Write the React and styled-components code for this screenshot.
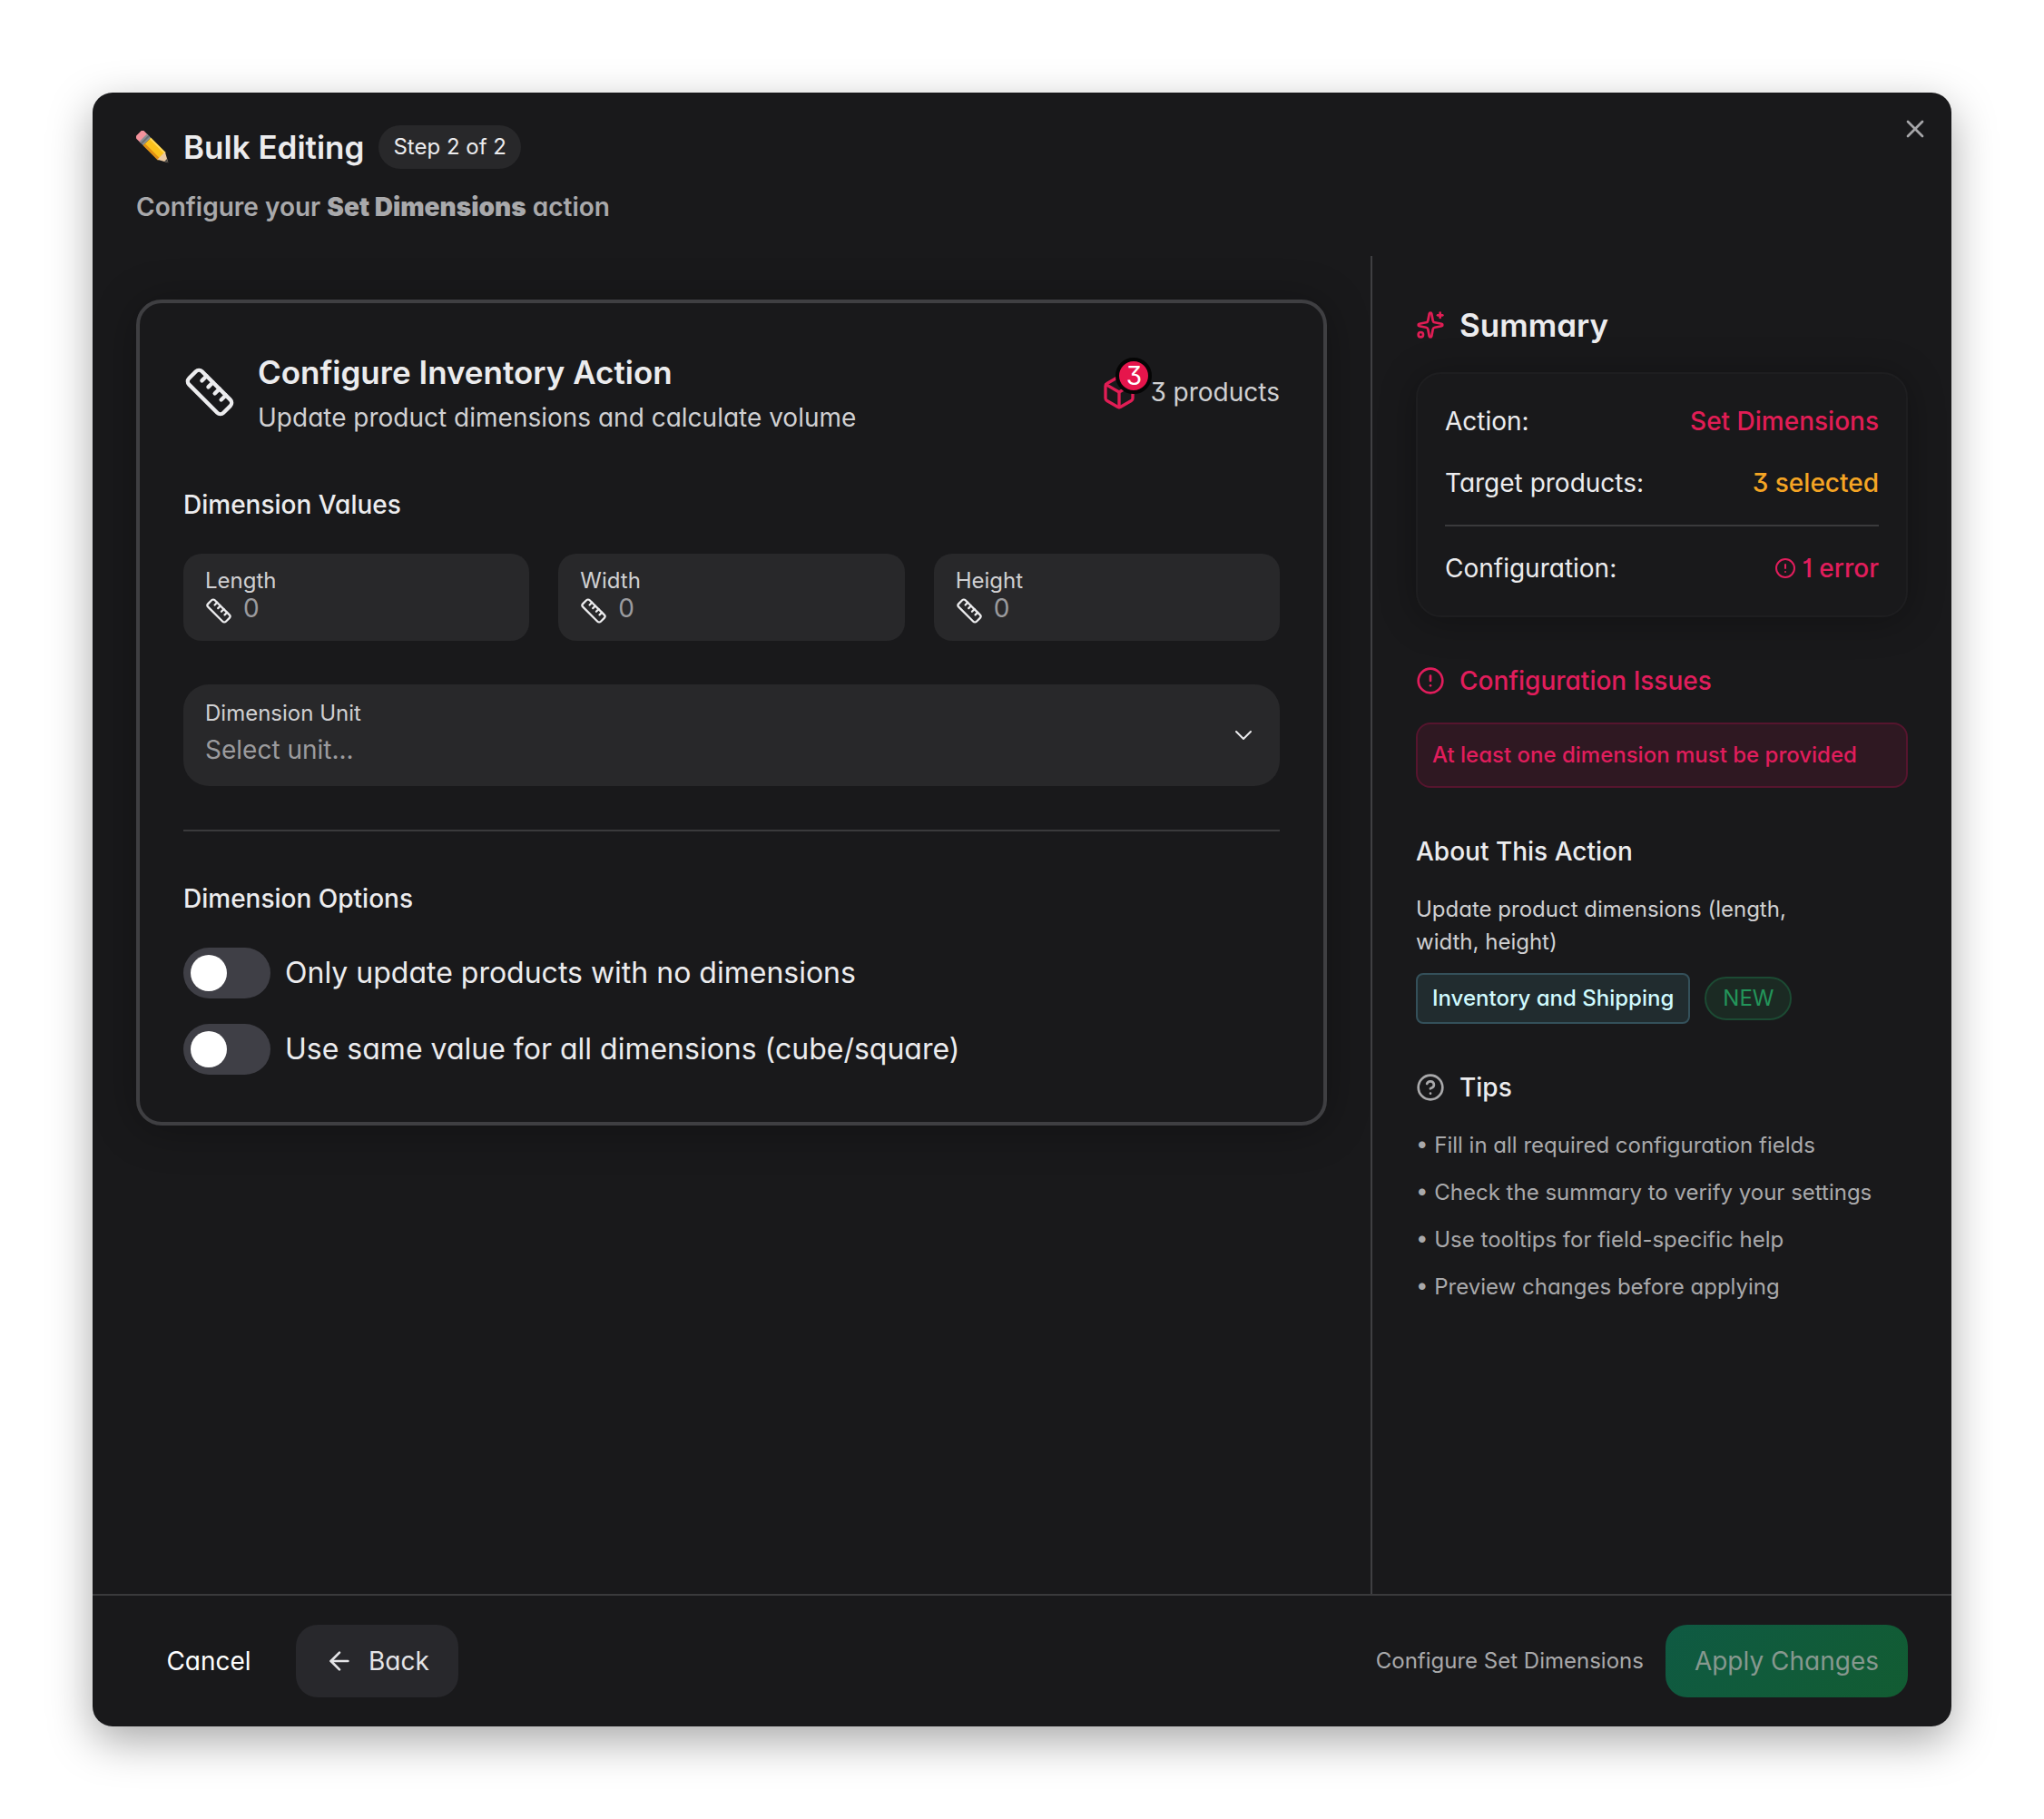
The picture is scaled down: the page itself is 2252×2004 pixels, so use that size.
import React, { useState } from 'react'
import styled, { createGlobalStyle, css } from 'styled-components'
import { ArrowLeft, Box, ChevronDown, CircleAlert, CircleHelp, Sparkles, X } from 'lucide-react'

const GlobalStyle = createGlobalStyle`
    * {
        box-sizing: border-box;
    }
    body {
        margin: 0;
        background: #ffffff;
        font-family: Inter, "Liberation Sans", sans-serif;
        font-feature-settings: "cv01", "cv09", "cv11";
        font-size: 28px;
        line-height: 40px;
        color: #ececee;
    }
    h1, h2, h3, p, ul {
        margin: 0;
        padding: 0;
        font-size: inherit;
        font-weight: 400;
    }
    button, input, select {
        font: inherit;
        font-feature-settings: inherit;
        letter-spacing: inherit;
        color: inherit;
    }
    svg {
        display: block;
        flex-shrink: 0;
    }
`

const Page = styled.div`
    min-height: 100vh;
    padding: 102px;
    display: flex;
`

const Modal = styled.div`
    position: relative;
    flex: 1;
    display: flex;
    flex-direction: column;
    border-radius: 22px;
    background: #19191b;
    box-shadow: 0 16px 48px rgba(0, 0, 0, 0.34);
`

const CloseButton = styled.button`
    position: absolute;
    top: 16px;
    right: 16px;
    padding: 8px;
    border: none;
    background: none;
    color: #a6a6a9;
    cursor: pointer;
`

const Header = styled.header`
    padding: 36px 48px 34px;
    display: flex;
    flex-direction: column;
    gap: 22px;
`

const TitleRow = styled.div`
    display: flex;
    align-items: center;
    gap: 16px;
`

const Title = styled.h1`
    font-size: 35px;
    line-height: 48px;
    font-weight: 600;
`

const StepBadge = styled.span`
    padding: 0 16px;
    border-radius: 24px;
    background: #28282a;
    font-size: 24px;
    line-height: 48px;
`

const Subtitle = styled.p`
    font-weight: 600;
    color: #a9a9ab;
    b {
        font-weight: 900;
    }
`

const Body = styled.div`
    flex: 1;
    display: flex;
`

const Main = styled.main`
    flex: 1;
    padding: 48px;
`

const Card = styled.section`
    padding: 48px 48px 52px;
    border: 4px solid #3f3f42;
    border-radius: 28px;
    box-shadow: 0 4px 48px rgba(0, 0, 0, 0.3);
`

const CardHeader = styled.div`
    display: flex;
    align-items: center;
    gap: 24px;
    margin-bottom: 54px;
`

const CardText = styled.div`
    flex: 1;
    h2 {
        font-size: 35px;
        line-height: 56px;
        font-weight: 600;
    }
    p {
        line-height: 44px;
        color: #d0d0d2;
    }
`

const Products = styled.div`
    display: flex;
    align-items: center;
    gap: 14px;
    color: #d0d0d2;
`

const BoxWrap = styled.div`
    position: relative;
    color: #e11d55;
`

const CountBadge = styled.span`
    position: absolute;
    top: -18px;
    right: -16px;
    width: 40px;
    height: 40px;
    border: 4px solid #050505;
    border-radius: 50%;
    background: #e6154c;
    color: #ffffff;
    line-height: 32px;
    text-align: center;
`

const SectionTitle = styled.h3`
    font-weight: 500;
`

const Fields = styled.div`
    display: grid;
    grid-template-columns: repeat(3, 1fr);
    gap: 32px;
    margin: 34px 0 48px;
`

const FieldBox = styled.label`
    display: block;
    height: 96px;
    padding: 14px 24px;
    border-radius: 20px;
    background: #28282a;
    font-size: 24px;
    line-height: 32px;
    color: #d0d0d2;
`

const FieldInput = styled.span`
    display: flex;
    align-items: flex-end;
    gap: 12px;
    height: 32px;
    color: #ececee;
    input {
        align-self: flex-start;
        width: 100%;
        height: 28px;
        padding: 0;
        border: none;
        outline: none;
        background: none;
        font-size: 28px;
        line-height: 28px;
    }
    input::placeholder {
        color: #9b9b9e;
        opacity: 1;
    }
`

const SelectBox = styled.label`
    display: flex;
    align-items: center;
    height: 112px;
    padding: 0 24px;
    border-radius: 28px;
    background: #28282a;
`

const SelectText = styled.span`
    flex: 1;
    display: flex;
    flex-direction: column;
    gap: 4px;
    padding-bottom: 4px;
    span {
        font-size: 24px;
        line-height: 32px;
        color: #d0d0d2;
    }
    select {
        appearance: none;
        height: 40px;
        padding: 0;
        border: none;
        outline: none;
        background: none;
        color: #9b9b9e;
    }
`

const Divider = styled.hr`
    width: 100%;
    height: 2px;
    margin: ${(props) => props.$margin};
    border: none;
    background: #3a3a3c;
`

const Switches = styled.div`
    display: flex;
    flex-direction: column;
    align-items: flex-start;
    gap: 28px;
    margin-top: 34px;
`

const SwitchLabel = styled.label`
    display: flex;
    align-items: center;
    gap: 16px;
    font-size: 32px;
    line-height: 56px;
    cursor: pointer;
`

const SwitchInput = styled.input`
    appearance: none;
    display: flex;
    align-items: center;
    width: 96px;
    height: 56px;
    margin: 0;
    padding: 0 8px;
    border-radius: 28px;
    background: #3f3f46;
    cursor: pointer;
    &::before {
        content: "";
        width: 40px;
        height: 40px;
        border-radius: 50%;
        background: #ffffff;
    }
    &:checked {
        justify-content: flex-end;
        background: #e11d55;
    }
`

const Aside = styled.aside`
    width: 640px;
    padding: 48px;
    border-left: 2px solid #3f3f42;
`

const AsideTitle = styled.h2`
    display: flex;
    align-items: center;
    gap: 16px;
    font-weight: 500;
    ${(props) => props.$large && css`
        font-size: 35px;
        line-height: 56px;
        font-weight: 600;
    `}
    color: ${(props) => props.$color || '#ececee'};
    svg {
        color: ${(props) => props.$iconColor};
    }
`

const SummaryCard = styled.div`
    margin: 24px 0 50px;
    padding: 32px 30px;
    border: 2px solid #1e1e20;
    border-radius: 28px;
    box-shadow: 0 4px 40px rgba(0, 0, 0, 0.3);
`

const SummaryRow = styled.div`
    display: flex;
    justify-content: space-between;
    & + & {
        margin-top: 28px;
    }
`

const Value = styled.span`
    display: flex;
    align-items: center;
    gap: 6px;
    font-weight: 500;
    color: ${(props) => props.$color};
`

const ErrorBox = styled.p`
    margin: 26px 0 50px;
    padding: 16px;
    border: 2px solid #56152e;
    border-radius: 16px;
    background: #2f1822;
    font-size: 24px;
    line-height: 36px;
    font-weight: 500;
    color: #e11d5c;
`

const About = styled.p`
    max-width: 480px;
    margin: 26px 0 16px;
    font-size: 24px;
    line-height: 36px;
    color: #d0d0d2;
`

const Chips = styled.div`
    display: flex;
    align-items: center;
    gap: 16px;
    margin-bottom: 50px;
    font-size: 24px;
`

const CategoryChip = styled.span`
    padding: 0 16px;
    border: 2px solid #34505a;
    border-radius: 8px;
    background: #212c2f;
    line-height: 52px;
    font-weight: 500;
    color: #cffafe;
`

const NewChip = styled.span`
    padding: 0 18px;
    border: 2px solid #1c4a33;
    border-radius: 24px;
    background: #1b2a23;
    line-height: 44px;
    color: #23955a;
`

const TipList = styled.ul`
    margin-top: 26px;
    display: flex;
    flex-direction: column;
    gap: 16px;
    list-style: none;
    font-size: 24px;
    line-height: 36px;
    color: #a9a9ab;
`

const Footer = styled.footer`
    display: flex;
    align-items: center;
    gap: 16px;
    padding: 32px 48px;
    border-top: 2px solid #3a3a3c;
`

const Button = styled.button`
    display: flex;
    align-items: center;
    justify-content: center;
    gap: 16px;
    min-width: 160px;
    height: 80px;
    padding: 0 32px;
    border: none;
    border-radius: 24px;
    background: ${(props) => props.$background || 'none'};
    color: ${(props) => props.$color};
    cursor: pointer;
`

const FooterNote = styled.span`
    margin: 0 8px 0 auto;
    font-size: 24px;
    color: #a9a9ab;
`

const RulerIcon = ({ size }) => (
    <svg width={size} height={size} viewBox="-12 -12 24 24" fill="none" stroke="currentColor" strokeWidth="1.8" strokeLinecap="round" aria-hidden="true">
        <g transform="rotate(45)">
            <rect x="-11.1" y="-4.2" width="22.2" height="8.4" rx="2" />
            <path d="M-6.2-4.2v3M-2.1-4.2v3M2.1-4.2v3M6.2-4.2v3" />
        </g>
    </svg>
)

const PencilIcon = () => (
    <svg width="36" height="36" viewBox="0 0 36 36" aria-hidden="true">
        <g transform="rotate(45)">
            <rect x="4" y="-6" width="12" height="12" rx="3" fill="#f3929c" />
            <path d="M11-6h6V6h-6Z" fill="#8a8f93" />
            <path d="M13-6h2V6h-2Z" fill="#6a6f73" />
            <path d="M17-6h23V6H17Z" fill="#fcc21b" />
            <path d="M17 3h23v3H17Z" fill="#e08e14" />
            <path d="M17-6h23v2H17Z" fill="#ffd95a" />
            <path d="M39-6 50 0 39 6Z" fill="#ecc9a0" />
            <path d="M46-2 50 0l-4 2Z" fill="#444444" />
        </g>
    </svg>
)

const fields = ['Length', 'Width', 'Height']
const units = ['Centimeters', 'Inches', 'Meters']
const options = [
    'Only update products with no dimensions',
    'Use same value for all dimensions (cube/square)',
]
const tips = [
    'Fill in all required configuration fields',
    'Check the summary to verify your settings',
    'Use tooltips for field-specific help',
    'Preview changes before applying',
]

function App() {
    const [values, setValues] = useState({})
    const [unit, setUnit] = useState('')

    return (
        <Page>
            <GlobalStyle />
            <Modal role="dialog" aria-labelledby="title">
                <Header>
                    <TitleRow>
                        <PencilIcon />
                        <Title id="title">Bulk Editing</Title>
                        <StepBadge>Step 2 of 2</StepBadge>
                    </TitleRow>
                    <Subtitle>Configure your <b>Set Dimensions</b> action</Subtitle>
                </Header>
                <Body>
                    <Main>
                        <Card>
                            <CardHeader>
                                <RulerIcon size={58} />
                                <CardText>
                                    <h2>Configure Inventory Action</h2>
                                    <p>Update product dimensions and calculate volume</p>
                                </CardText>
                                <Products>
                                    <BoxWrap>
                                        <Box size={40} />
                                        <CountBadge>3</CountBadge>
                                    </BoxWrap>
                                    3 products
                                </Products>
                            </CardHeader>
                            <SectionTitle>Dimension Values</SectionTitle>
                            <Fields>
                                {fields.map((name) => (
                                    <FieldBox key={name}>
                                        {name}
                                        <FieldInput>
                                            <RulerIcon size={30} />
                                            <input
                                                type="text"
                                                inputMode="decimal"
                                                placeholder="0"
                                                value={values[name] || ''}
                                                onChange={(e) => setValues({ ...values, [name]: e.target.value })}
                                            />
                                        </FieldInput>
                                    </FieldBox>
                                ))}
                            </Fields>
                            <SelectBox>
                                <SelectText>
                                    <span>Dimension Unit</span>
                                    <select value={unit} onChange={(e) => setUnit(e.target.value)}>
                                        <option value="">Select unit...</option>
                                        {units.map((name) => <option key={name}>{name}</option>)}
                                    </select>
                                </SelectText>
                                <ChevronDown size={32} strokeWidth={1.5} />
                            </SelectBox>
                            <Divider $margin="48px 0 54px" />
                            <SectionTitle>Dimension Options</SectionTitle>
                            <Switches>
                                {options.map((text) => (
                                    <SwitchLabel key={text}>
                                        <SwitchInput type="checkbox" role="switch" />
                                        {text}
                                    </SwitchLabel>
                                ))}
                            </Switches>
                        </Card>
                    </Main>
                    <Aside>
                        <AsideTitle $large $iconColor="#e11d55">
                            <Sparkles size={32} />
                            Summary
                        </AsideTitle>
                        <SummaryCard>
                            <SummaryRow>
                                Action:
                                <Value $color="#e11d55">Set Dimensions</Value>
                            </SummaryRow>
                            <SummaryRow>
                                Target products:
                                <Value $color="#f5a524">3 selected</Value>
                            </SummaryRow>
                            <Divider $margin="26px 0" />
                            <SummaryRow>
                                Configuration:
                                <Value $color="#e11d5c">
                                    <CircleAlert size={24} strokeWidth={2} />
                                    1 error
                                </Value>
                            </SummaryRow>
                        </SummaryCard>
                        <AsideTitle $color="#e11d5c" $iconColor="#e11d5c">
                            <CircleAlert size={32} strokeWidth={2} />
                            Configuration Issues
                        </AsideTitle>
                        <ErrorBox>At least one dimension must be provided</ErrorBox>
                        <AsideTitle>About This Action</AsideTitle>
                        <About>Update product dimensions (length, width, height)</About>
                        <Chips>
                            <CategoryChip>Inventory and Shipping</CategoryChip>
                            <NewChip>NEW</NewChip>
                        </Chips>
                        <AsideTitle $iconColor="#a9a9ab">
                            <CircleHelp size={32} strokeWidth={2} />
                            Tips
                        </AsideTitle>
                        <TipList>
                            {tips.map((tip) => <li key={tip}>• {tip}</li>)}
                        </TipList>
                    </Aside>
                </Body>
                <Footer>
                    <Button type="button" $color="#ffffff">Cancel</Button>
                    <Button type="button" $background="#28282c" $color="#e4e4e7">
                        <ArrowLeft size={32} strokeWidth={2} />
                        Back
                    </Button>
                    <FooterNote>Configure Set Dimensions</FooterNote>
                    <Button type="button" disabled $background="linear-gradient(135deg, #0f5a43, #125c32)" $color="#87988f">
                        Apply Changes
                    </Button>
                </Footer>
                <CloseButton type="button" aria-label="Close">
                    <X size={32} strokeWidth={2} />
                </CloseButton>
            </Modal>
        </Page>
    )
}

export default App
